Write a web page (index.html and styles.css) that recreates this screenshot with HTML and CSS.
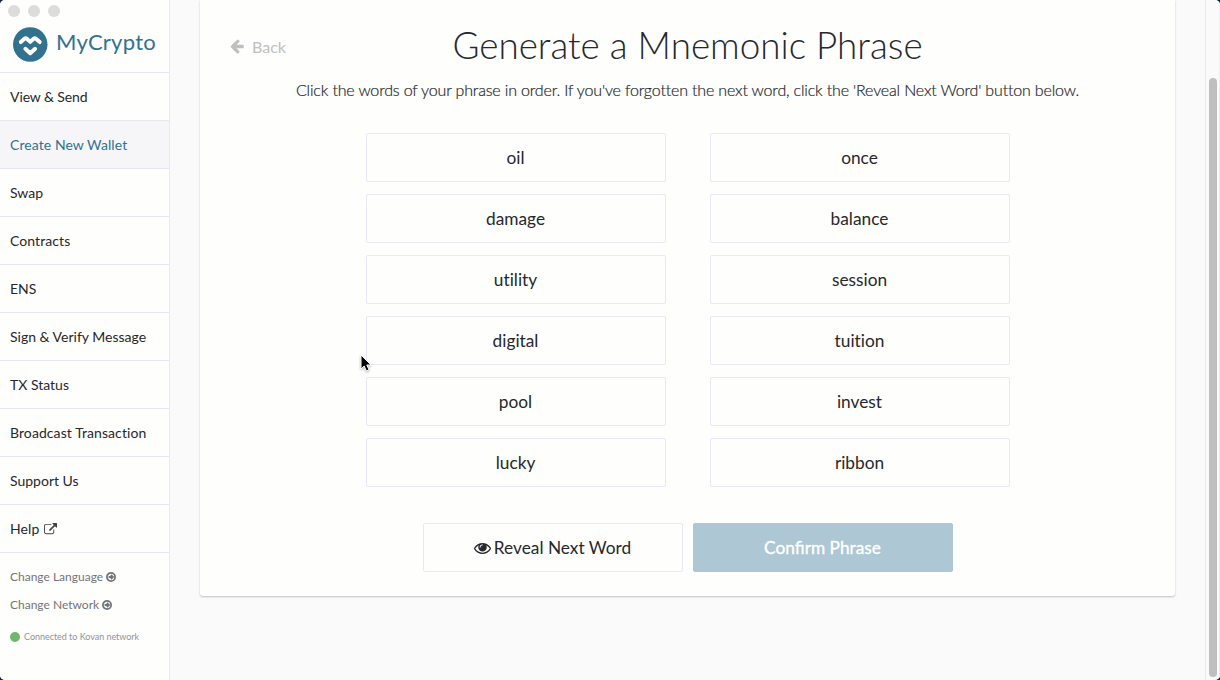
FILE: index.html
```
<!DOCTYPE html>
<html lang="en">
<head>
<meta charset="utf-8">
<title>MyCrypto</title>
<link rel="stylesheet" href="styles.css">
</head>
<body>
<div class="window">
  <aside class="sidebar">
    <header class="brand">
      <div class="lights"><i></i><i></i><i></i></div>
      <div class="logo">
        <svg class="logo-mark" viewBox="0 0 34 34"><circle cx="17" cy="17" r="17" fill="#32728f"/><path d="M7.7 14.6l3.6-3.2q1.2-1 2.4 0l3.3 3 3.3-3q1.2-1 2.4 0l3.6 3.2M12.2 21.2l4.8 4.4 4.8-4.4" fill="none" stroke="#fff" stroke-width="3.9" stroke-linecap="round" stroke-linejoin="round"/></svg>
        <span class="logo-name">MyCrypto</span>
      </div>
    </header>
    <nav class="nav">
      <a class="nav-item"><span class="tight">View &amp; Send</span></a>
      <a class="nav-item active"><span class="wide">Create New Wallet</span></a>
      <a class="nav-item"><span>Swap</span></a>
      <a class="nav-item"><span class="wide">Contracts</span></a>
      <a class="nav-item"><span>ENS</span></a>
      <a class="nav-item"><span>Sign &amp; Verify Message</span></a>
      <a class="nav-item"><span>TX Status</span></a>
      <a class="nav-item"><span class="wide">Broadcast Transaction</span></a>
      <a class="nav-item"><span>Support Us</span></a>
      <a class="nav-item"><span class="wide">Help</span><svg class="ext" viewBox="0 0 1792 1792"><path d="M1408 928v320q0 119-84.5 203.5t-203.5 84.5h-832q-119 0-203.5-84.5t-84.5-203.5v-832q0-119 84.5-203.5t203.5-84.5h704q14 0 23 9t9 23v64q0 14-9 23t-23 9h-704q-66 0-113 47t-47 113v832q0 66 47 113t113 47h832q66 0 113-47t47-113v-320q0-14 9-23t23-9h64q14 0 23 9t9 23zm384-864v512q0 26-19 45t-45 19-45-19l-176-176-652 652q-10 10-23 10t-23-10l-114-114q-10-10-10-23t10-23l652-652-176-176q-19-19-19-45t19-45 45-19h512q26 0 45 19t19 45z"/></svg></a>
    </nav>
    <footer class="side-foot">
      <a class="change"><span>Change Language</span><svg class="circ" viewBox="0 0 10 10"><circle cx="5" cy="5" r="4.1"/><path d="M2.6 5H6.6M4.9 3L6.9 5 4.9 7"/></svg></a>
      <a class="change"><span>Change Network</span><svg class="circ" viewBox="0 0 10 10"><circle cx="5" cy="5" r="4.1"/><path d="M2.6 5H6.6M4.9 3L6.9 5 4.9 7"/></svg></a>
      <div class="status"><i class="dot"></i><span>Connected to Kovan network</span></div>
    </footer>
  </aside>
  <main class="content">
    <section class="card">
      <div class="head">
        <a class="back"><svg class="arrow" viewBox="0 0 1792 1792"><path d="M1664 896v128q0 53-32.5 90.5t-84.5 37.5h-704l293 294q38 36 38 90t-38 90l-75 76q-37 37-90 37-52 0-91-37l-651-652q-37-37-37-90 0-52 37-91l651-650q38-38 91-38 52 0 90 38l75 74q38 38 38 91t-38 91l-293 293h704q52 0 84.5 37.5t32.5 90.5z"/></svg><span>Back</span></a>
        <h1 class="title"><span>Generate a Mnemonic Phrase</span></h1>
      </div>
      <p class="desc"><span>Click the words of your phrase in order. If you've forgotten the next word, click the 'Reveal Next Word' button below.</span></p>
      <div class="words">
        <button class="btn">oil</button><button class="btn">once</button>
        <button class="btn">damage</button><button class="btn">balance</button>
        <button class="btn">utility</button><button class="btn">session</button>
        <button class="btn">digital</button><button class="btn">tuition</button>
        <button class="btn">pool</button><button class="btn">invest</button>
        <button class="btn">lucky</button><button class="btn">ribbon</button>
      </div>
      <div class="actions">
        <button class="btn"><svg class="eye" viewBox="0 384 1792 1152"><path d="M1664 960q-152-236-381-353 61 104 61 225 0 185-131.5 316.5t-316.5 131.5-316.5-131.5-131.5-316.5q0-121 61-225-229 117-381 353 133 205 333.5 326.5t434.5 121.5 434.5-121.5 333.5-326.5zm-720-384q0-20-14-34t-34-14q-125 0-214.5 89.5t-89.5 214.5q0 20 14 34t34 14 34-14 14-34q0-86 61-147t147-61q20 0 34-14t14-34zm848 384q0 34-20 69-140 230-376.5 368.5t-499.5 138.5-499.5-139-376.5-368q-20-35-20-69t20-69q140-229 376.5-368t499.5-139 499.5 139 376.5 368q20 35 20 69z"/></svg><span>Reveal Next Word</span></button>
        <button class="btn primary">Confirm Phrase</button>
      </div>
    </section>
  </main>
  <div class="scroll"><div class="thumb"></div></div>
  <svg class="cursor" viewBox="0 0 14 20"><path d="M2 2v14l3.2-3 2.2 5 2.6-1.2-2.2-4.8H12z" fill="#000" stroke="#fff" stroke-width="1"/></svg>
</div>
</body>
</html>
```
FILE: styles.css
```
* { box-sizing: border-box; }
body { margin: 0; background: #14233c; font-family: Lato, sans-serif; font-variant-ligatures: no-common-ligatures; color: #26282c; }
.window { position: relative; display: flex; width: 1220px; height: 680px; overflow: hidden; border-radius: 5px; background: #fafafb; }
.sidebar { width: 170px; background: #fefefd; border-right: 1px solid #e9eaf0; }
.brand { height: 73px; border-bottom: 1px solid #e6e8ef; padding: 5px 8px 0; }
.lights { display: flex; gap: 8px; }
.lights i { width: 12px; height: 12px; border-radius: 50%; background: #dcdcdc; }
.logo { display: flex; align-items: flex-start; margin: 10px 0 0 5px; height: 35px; }
.logo-mark { width: 34.5px; height: 35px; flex: none; }
.logo-name { margin-left: 8.5px; font-size: 22px; line-height: 30px; letter-spacing: .25px; color: #32728f; }
.nav-item { display: flex; align-items: center; height: 48px; padding-left: 10px; border-bottom: 1px solid #e6e8ef; font-size: 14px; }
.nav-item.active { background: #f6f6f8; color: #32728f; }
.tight { letter-spacing: -.1px; }
.wide { letter-spacing: .08px; }
.ext { width: 13px; height: 13px; margin: 2px 0 0 5px; fill: #444; }
.side-foot { padding: 9px 0 0 10px; color: #737477; }
.change { display: flex; align-items: center; height: 28px; padding-top: 1px; font-size: 12px; }
.circ { width: 10px; height: 10px; margin: 0 0 0 3px; fill: none; stroke: #737477; stroke-width: 1.8; }
.status { display: flex; align-items: center; height: 20px; margin-top: 9px; font-size: 9px; color: #929396; }
.status span { margin-bottom: 1px; letter-spacing: -.03px; }
.dot { width: 10px; height: 10px; margin-right: 4px; border-radius: 50%; background: #6eb76b; }
.content { width: 1035px; padding-left: 30px; }
.card { width: 975px; height: 596px; background: #fefefd; border-radius: 0 0 3px 3px; box-shadow: 0 1px 2px rgba(40,45,60,.28); padding-top: 17px; }
.head { display: grid; grid-template-columns: 100px 1fr 100px; align-items: center; height: 56px; }
.back { display: flex; align-items: center; padding: 2px 0 0 29px; font-size: 16px; color: #bfc0c1; }
.arrow { width: 16px; height: 16px; margin-right: 7px; fill: #bfc0c1; flex: none; }
.title { margin: 0; text-align: center; font-weight: 300; font-size: 36.8px; line-height: 56px; white-space: nowrap; }
.desc { margin: 5px 0 0; text-align: center; font-weight: 300; font-size: 16px; line-height: 24px; letter-spacing: -.16px; white-space: nowrap; -webkit-text-stroke: .2px; }
.words { display: grid; grid-template-columns: 300px 300px; gap: 12px 44px; justify-content: center; margin-top: 31px; padding-left: 1px; }
.btn { display: flex; align-items: center; justify-content: center; height: 49px; padding: 0 1px 0 0; border: 1px solid #e8e9f4; border-radius: 2px; background: #fefefd; font-family: inherit; font-size: 17.3px; font-variant-ligatures: inherit; color: inherit; }
.actions { display: grid; grid-template-columns: 260px 260px; gap: 10px; justify-content: center; margin-top: 36px; padding-left: 1px; }
.eye { width: 17px; height: 11px; margin: 1px 3px 0 0; fill: #26282c; }
.primary { background: #adc8d4; border-color: #adc8d4; color: #fff; font-variant-ligatures: common-ligatures; -webkit-text-stroke: .3px; }
.scroll { width: 15px; border-left: 1px solid #e9e9ea; border-right: 1px solid #eeeeef; padding: 78px 0 0 3px; background: #fafafb; }
.thumb { width: 8px; height: 599px; border-radius: 4px; background: #bfbfbf; }
.cursor { position: absolute; left: 359px; top: 353px; width: 14px; height: 20px; filter: drop-shadow(0 1px 1px rgba(0,0,0,.3)); }
```
